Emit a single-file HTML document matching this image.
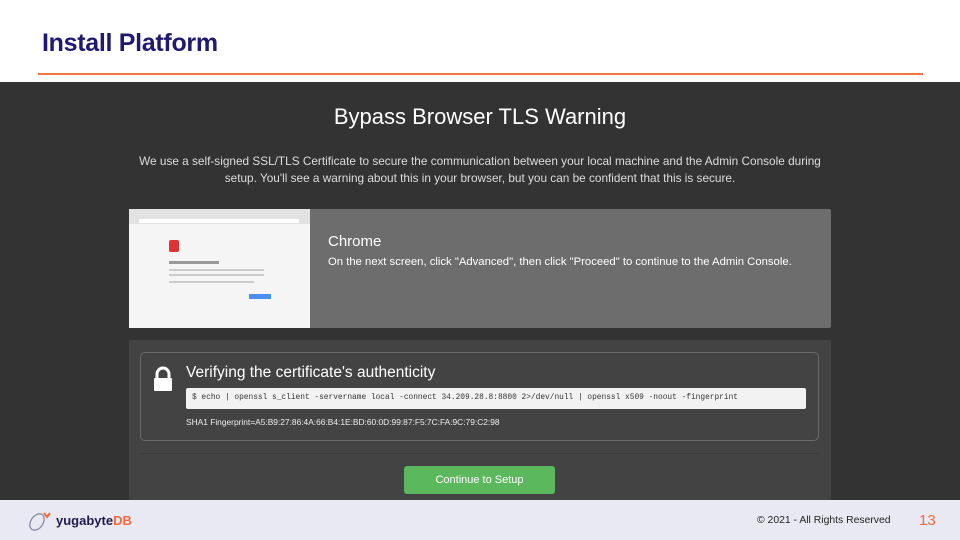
<!DOCTYPE html>
<html><head><style>
*{margin:0;padding:0;box-sizing:border-box}
body{width:960px;height:540px;overflow:hidden;background:#fff;font-family:"Liberation Sans",sans-serif;position:relative}
.abs{position:absolute}
</style></head><body>
<div class="abs" style="left:42px;top:29px;font-size:25px;font-weight:bold;color:#1f1a6e;letter-spacing:-0.3px">Install Platform</div>
<div class="abs" style="left:38px;top:73px;width:885px;height:2px;background:#f4763e"></div>
<div class="abs" style="left:0;top:82px;width:960px;height:418px;background:#333"></div>
<div class="abs" style="left:0;top:104px;width:960px;text-align:center;color:#fff;font-size:22px">Bypass Browser TLS Warning</div>
<div class="abs" style="left:130px;top:153px;width:700px;text-align:center;color:#ddd;font-size:11.8px;line-height:17px">We use a self-signed SSL/TLS Certificate to secure the communication between your local machine and the Admin Console during setup. You'll see a warning about this in your browser, but you can be confident that this is secure.</div>
<div class="abs" style="left:129px;top:209px;width:702px;height:119px;background:#6d6d6d;border-radius:2px"></div>
<div class="abs" style="left:129px;top:209px;width:181px;height:119px;background:#f5f5f5">
 <div class="abs" style="left:0;top:0;width:181px;height:15px;background:#e2e2e2"></div>
 <div class="abs" style="left:10px;top:10px;width:160px;height:4px;background:#fff"></div>
 <div class="abs" style="left:40px;top:31px;width:10px;height:12px;background:#d33;border-radius:2px"></div>
 <div class="abs" style="left:40px;top:52px;width:50px;height:3px;background:#999"></div>
 <div class="abs" style="left:40px;top:60px;width:95px;height:2px;background:#ccc"></div>
 <div class="abs" style="left:40px;top:65px;width:95px;height:2px;background:#ccc"></div>
 <div class="abs" style="left:40px;top:72px;width:85px;height:2px;background:#ccc"></div>
 <div class="abs" style="left:120px;top:85px;width:22px;height:5px;background:#4a8ff0"></div>
</div>
<div class="abs" style="left:328px;top:233px;color:#fff;font-size:15px">Chrome</div>
<div class="abs" style="left:328px;top:256px;color:#fff;font-size:11.3px">On the next screen, click "Advanced", then click "Proceed" to continue to the Admin Console.</div>
<div class="abs" style="left:129px;top:340px;width:702px;height:160px;background:#434343"></div>
<div class="abs" style="left:140px;top:352px;width:679px;height:89px;border:1px solid #6a6a6a;border-radius:5px"></div>
<svg class="abs" style="left:152px;top:366px" width="22" height="26"><path d="M5 12V8a6 6 0 0 1 12 0v4" stroke="#fff" stroke-width="3" fill="none"/><rect x="2" y="12" width="18" height="13" rx="1" fill="#fff"/></svg>
<div class="abs" style="left:186px;top:364px;color:#fff;font-size:15.5px">Verifying the certificate's authenticity</div>
<div class="abs" style="left:186px;top:388px;width:620px;height:21px;background:#f2f2f2;border-radius:2px;font-family:'Liberation Mono',monospace;font-size:7.85px;color:#333;padding:5px 6px;white-space:nowrap">$ echo | openssl s_client -servername local -connect 34.209.28.8:8800 2&gt;/dev/null | openssl x509 -noout -fingerprint</div>
<div class="abs" style="left:186px;top:417px;color:#eee;font-size:8.4px">SHA1 Fingerprint=A5:B9:27:86:4A:66:B4:1E:BD:60:0D:99:87:F5:7C:FA:9C:79:C2:98</div>
<div class="abs" style="left:140px;top:453px;width:679px;height:1px;background:#3a3a3a"></div>
<div class="abs" style="left:404px;top:466px;width:151px;height:28px;background:#5cb85c;border-radius:3px;color:#fff;font-size:11px;text-align:center;line-height:28px">Continue to Setup</div>
<div class="abs" style="left:0;top:500px;width:960px;height:40px;background:#e9e9f3"></div>
<svg class="abs" style="left:26px;top:510px" width="26" height="22"><ellipse cx="11" cy="12" rx="6" ry="9" transform="rotate(35 11 12)" stroke="#8a8aa8" stroke-width="1.3" fill="none"/><path d="M18 3l3 4 3-4" stroke="#f26b3a" stroke-width="2" fill="none"/></svg>
<div class="abs" style="left:56px;top:513px;font-size:13px;font-weight:bold;color:#1f1a4e">yugabyte<span style="color:#f26b3a">DB</span></div>
<div class="abs" style="left:757px;top:515px;font-size:10.4px;color:#222">© 2021 - All Rights Reserved</div>
<div class="abs" style="left:919px;top:512px;font-size:15px;color:#f26b3a">13</div>
</body></html>
